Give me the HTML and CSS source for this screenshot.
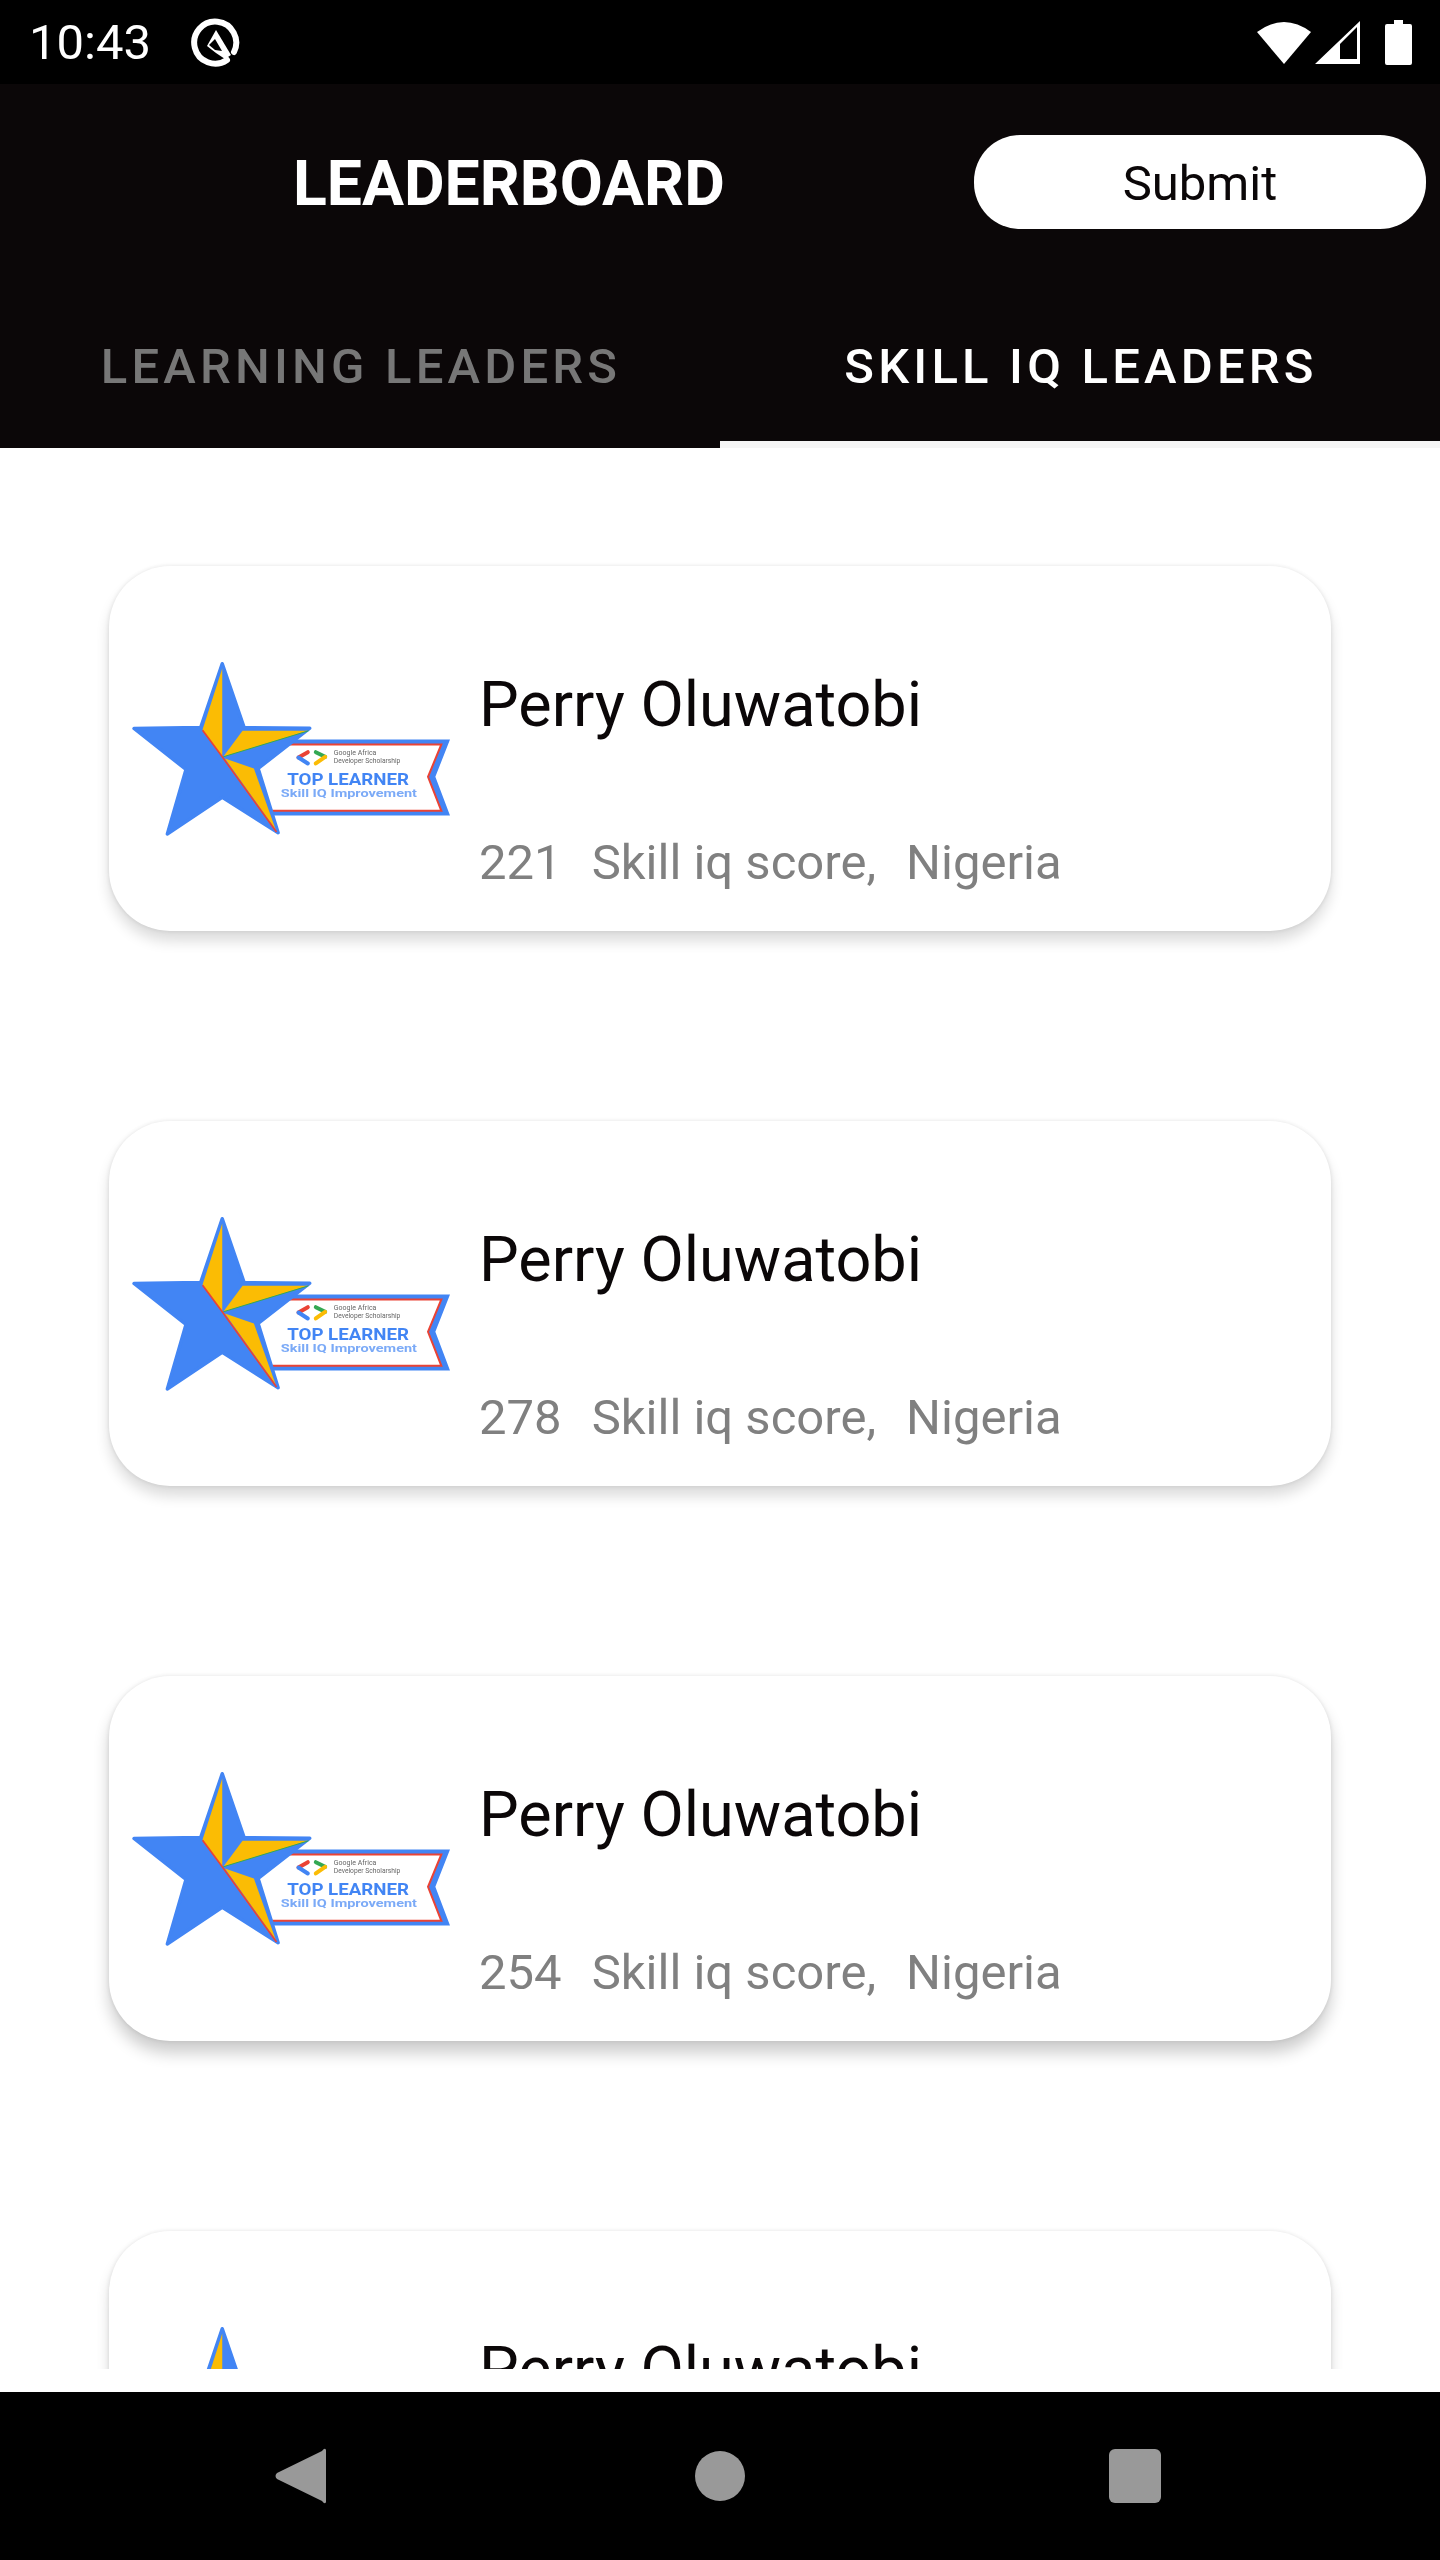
FILE: index.html
```html
<!DOCTYPE html>
<html lang="en">
<head>
    <meta charset="UTF-8" />
    <meta name="viewport" content="width=device-width, initial-scale=1.0" />
    <title>Leaderboard</title>
    <link rel="stylesheet" href="styles.css">
</head>
<body>
    <div class="status-bar">
        <span class="clock">10:43</span>
        <svg class="q-icon" viewBox="0 0 50 50">
            <path d="M36 43 A21 21 0 1 1 43 35" fill="none" stroke="#fff" stroke-width="6" stroke-linecap="round" />
            <path d="M25 13 L40 38 L34 42 L25 36 L16 29 Z" fill="#fff" />
            <path d="M24 22 L31 34 L24 33 L18 28 Z" fill="#000" />
        </svg>
        <div class="status-right">
            <svg class="wifi-icon" viewBox="0 0 54 44">
                <path d="M27 44 L0 12 Q27 -8 54 12 Z" fill="#fff" />
            </svg>
            <svg class="signal-icon" viewBox="0 0 45 43">
                <path d="M45 0 V43 H0 Z M42 6 L25 23 V38 H42 Z" fill="#fff" fill-rule="evenodd" />
            </svg>
            <svg class="battery-icon" viewBox="0 0 27 45">
                <path d="M9 0 H18 V4 H25 Q27 4 27 6 V43 Q27 45 25 45 H2 Q0 45 0 43 V6 Q0 4 2 4 H9 Z" fill="#fff" />
            </svg>
        </div>
    </div>

    <header class="app-header">
        <div class="toolbar">
            <h1 class="title">LEADERBOARD</h1>
            <button class="submit-btn">Submit</button>
        </div>
        <div class="tabs">
            <div class="tab">LEARNING LEADERS</div>
            <div class="tab tab-active">SKILL IQ LEADERS</div>
        </div>
    </header>

    <main class="list">
        <div class="card">
            <svg class="badge" viewBox="60 60 970 530">
                <g id="badge-art">
                    <!-- ribbon -->
                    <polygon points="540,298 1021,298 977,410 1021,526 480,526 440,385" fill="#4285f4" />
                    <polygon points="530,313 995,313 955,410 995,512 480,512 440,385" fill="#fff" stroke="#ea4335" stroke-width="6" />
                    <!-- star -->
                    <polygon points="337,70 403,262 600,264 445,385 505,578 337,472 172,582 228,388 72,265 272,262" fill="#4285f4" stroke="#4285f4" stroke-width="10" stroke-linejoin="round" />
                    <polygon points="337,85 337,350 278,268" fill="#fbbc04" />
                    <polygon points="398,272 594,272 340,350" fill="#fbbc04" />
                    <polygon points="345,355 432,385 498,570" fill="#fbbc04" />
                    <polyline points="278,270 337,350 500,576" fill="none" stroke="#ea4335" stroke-width="5" />
                    <line x1="340" y1="350" x2="596" y2="272" stroke="#34a853" stroke-width="3" />
                    <!-- code logo -->
                    <g fill="none" stroke-width="12" stroke-linecap="round">
                        <line x1="566" y1="352" x2="594" y2="336" stroke="#ea4335" />
                        <line x1="566" y1="352" x2="594" y2="370" stroke="#4285f4" />
                        <line x1="618" y1="336" x2="646" y2="350" stroke="#34a853" />
                        <line x1="646" y1="350" x2="618" y2="370" stroke="#fbbc04" />
                    </g>
                    <text class="badge-small" x="672" y="345" textLength="128" lengthAdjust="spacingAndGlyphs">Google Africa</text>
                    <text class="badge-small" x="672" y="370" textLength="200" lengthAdjust="spacingAndGlyphs">Developer Scholarship</text>
                    <text class="badge-top" x="532" y="434" textLength="366" lengthAdjust="spacingAndGlyphs">TOP LEARNER</text>
                    <text class="badge-skill" x="513" y="472" textLength="409" lengthAdjust="spacingAndGlyphs">Skill IQ Improvement</text>
                </g>
            </svg>
            <div class="card-text">
                <div class="name">Perry Oluwatobi</div>
                <div class="meta"><span>221</span><span>Skill iq score,</span><span>Nigeria</span></div>
            </div>
        </div>
        <div class="card">
            <svg class="badge" viewBox="60 60 970 530"><use href="#badge-art" /></svg>
            <div class="card-text">
                <div class="name">Perry Oluwatobi</div>
                <div class="meta"><span>278</span><span>Skill iq score,</span><span>Nigeria</span></div>
            </div>
        </div>
        <div class="card">
            <svg class="badge" viewBox="60 60 970 530"><use href="#badge-art" /></svg>
            <div class="card-text">
                <div class="name">Perry Oluwatobi</div>
                <div class="meta"><span>254</span><span>Skill iq score,</span><span>Nigeria</span></div>
            </div>
        </div>
        <div class="card">
            <svg class="badge" viewBox="60 60 970 530"><use href="#badge-art" /></svg>
            <div class="card-text">
                <div class="name">Perry Oluwatobi</div>
            </div>
        </div>
    </main>

    <nav class="nav-bar">
        <svg class="nav-back" viewBox="0 0 52 56">
            <path d="M51 2 V54 Q50 57 47 53 L2 31 Q-1 28 2 25 L47 3 Q50 -1 51 2 Z" fill="#999" />
        </svg>
        <div class="nav-home"></div>
        <div class="nav-recent"></div>
    </nav>
</body>
</html>
```

FILE: styles.css
```css
* { box-sizing: border-box; }
body {
    font-family: 'Roboto', sans-serif;
    margin: 0;
    width: 1440px;
    height: 2560px;
    background-color: #fff;
    display: flex;
    flex-direction: column;
    overflow: hidden;
}

/* Status bar */
.status-bar {
    height: 84px;
    flex-shrink: 0;
    background: #000;
    color: #fff;
    display: flex;
    align-items: center;
    padding: 0 28px 0 29px;
}
.clock { font-size: 49px; font-weight: 400; }
.q-icon { width: 50px; height: 50px; margin-left: 40px; }
.status-right { margin-left: auto; display: flex; align-items: center; }
.wifi-icon { width: 54px; height: 44px; }
.signal-icon { width: 45px; height: 43px; margin-left: 4px; }
.battery-icon { width: 27px; height: 45px; margin-left: 25px; }

/* Header */
.app-header { background: #0b0708; flex-shrink: 0; }
.toolbar {
    height: 196px;
    display: flex;
    align-items: center;
    justify-content: space-between;
    padding: 0 14px 0 293px;
}
.title { margin: 3px 0 0; font-size: 62.5px; font-weight: 700; color: #fff; }
.submit-btn {
    width: 452px;
    height: 94px;
    border: none;
    border-radius: 46px;
    background: #fff;
    color: #0b0708;
    font-family: inherit;
    font-size: 49px;
    padding-top: 3px;
}
.tabs { display: flex; height: 168px; }
.tab {
    flex: 1;
    display: flex;
    align-items: center;
    justify-content: center;
    padding: 4px 0 0 2px;
    font-size: 49px;
    font-weight: 500;
    letter-spacing: 4.2px;
    color: #777;
}
.tab-active { color: #fff; border-bottom: 7px solid #f5f5f5; padding-top: 11px; }

/* List */
.list {
    flex: 1;
    min-height: 0;
    overflow: hidden;
    margin-bottom: 23px;
    padding: 118px 109px 0;
    display: flex;
    flex-direction: column;
    gap: 190px;
}
.card {
    height: 365px;
    flex-shrink: 0;
    display: flex;
    background: #fff;
    border-radius: 61px;
    padding: 94px 0 0 21px;
    box-shadow: 0 10px 14px rgba(0, 0, 0, 0.14), 0 0 4px rgba(0, 0, 0, 0.1);
}
.card:nth-child(3) { box-shadow: 0 12px 16px rgba(0, 0, 0, 0.2), 0 0 4px rgba(0, 0, 0, 0.1); }
.badge { width: 323px; height: 177px; flex-shrink: 0; filter: blur(0.5px); }
.badge-small { font-size: 19px; fill: #666; }
.badge-top { font-size: 50px; font-weight: 700; fill: #4285f4; }
.badge-skill { font-size: 33px; font-weight: 700; fill: #7baaf7; }
.card-text { margin-left: 26px; padding-top: 8px; }
.name { font-size: 63px; line-height: 74px; color: #0b0708; }
.meta {
    margin-top: 92px;
    font-size: 49px;
    line-height: 57px;
    color: #808080;
    display: flex;
    gap: 30px;
}

/* Bottom nav */
.nav-bar {
    height: 168px;
    flex-shrink: 0;
    background: #000;
    position: relative;
}
.nav-back { position: absolute; left: 275px; top: 56px; width: 52px; height: 56px; }
.nav-home {
    position: absolute;
    left: 695px;
    top: 59px;
    width: 50px;
    height: 50px;
    border-radius: 50%;
    background: #999;
}
.nav-recent {
    position: absolute;
    left: 1109px;
    top: 57px;
    width: 52px;
    height: 54px;
    border-radius: 6px;
    background: #999;
}
```
